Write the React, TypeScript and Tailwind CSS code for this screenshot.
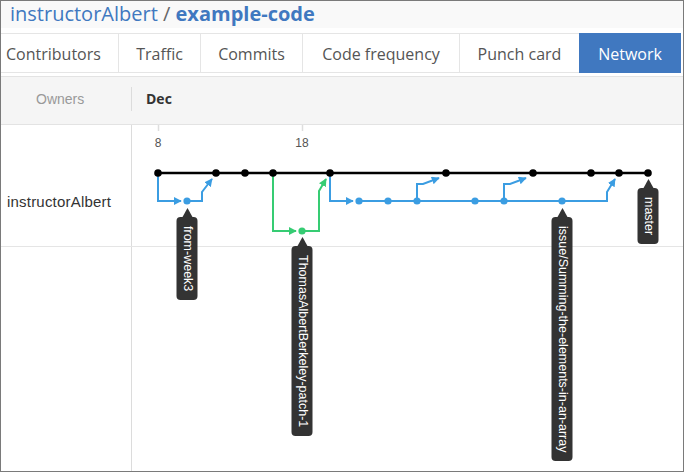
import React from 'react';

const BLUE = '#3b9de2';
const GREEN = '#36cc73';

const TABS = [
  { label: 'Contributors', cls: 'w-[118px] justify-start pl-[5px] border-r border-[#e5e5e5]' },
  { label: 'Traffic', cls: 'w-[82px] justify-center border-r border-[#e5e5e5]' },
  { label: 'Commits', cls: 'w-[102px] justify-center border-r border-[#e5e5e5]' },
  { label: 'Code frequency', cls: 'w-[157px] justify-center border-r border-[#e5e5e5]' },
  { label: 'Punch card', cls: 'w-[119px] justify-center' },
];

const MASTER_DOTS = [158, 216, 245, 273, 330, 446, 533, 591, 619, 648];
const BLUE_DOTS = [187, 359, 388, 417, 475, 504, 562];

// branch labels: x = dot x in body coords, top = pointer tip in body coords
const LABELS = [
  { text: 'from-week3', pos: 'left-[186px] top-[83px]' },
  { text: 'ThomasAlbertBerkeley-patch-1', pos: 'left-[301px] top-[112px]' },
  { text: 'issue/Summing-the-elements-in-an-array', pos: 'left-[561px] top-[83px]' },
  { text: 'master', pos: 'left-[647px] top-[54px]' },
];

function BranchLabel({ text, pos }: { text: string; pos: string }) {
  return (
    <div className={`absolute ${pos} -translate-x-1/2 flex flex-col items-center`}>
      <div className="w-0 h-0 border-x-[5px] border-x-transparent border-b-[9px] border-b-[#333]" />
      <div className="w-[21px] bg-[#333] rounded-[4px] py-[9px] flex justify-center">
        <span className="[writing-mode:vertical-rl] leading-[21px] text-[12.5px] text-white font-['Liberation_Sans',Arial,sans-serif] whitespace-nowrap">
          {text}
        </span>
      </div>
    </div>
  );
}

function NetworkGraph() {
  const line = { fill: 'none', strokeWidth: 2, strokeLinejoin: 'miter' as const };
  return (
    <svg
      className="absolute left-0 top-0"
      width={682}
      height={346}
      viewBox="1 125 682 346"
    >
      <defs>
        <marker id="arrowBlue" viewBox="0 0 10 10" refX="9" refY="5" markerWidth="8" markerHeight="8" markerUnits="userSpaceOnUse" orient="auto">
          <path d="M0,0 L10,5 L0,10 z" fill={BLUE} />
        </marker>
        <marker id="arrowGreen" viewBox="0 0 10 10" refX="9" refY="5" markerWidth="8" markerHeight="8" markerUnits="userSpaceOnUse" orient="auto">
          <path d="M0,0 L10,5 L0,10 z" fill={GREEN} />
        </marker>
      </defs>

      {/* day ticks */}
      <line x1={158.5} y1={125} x2={158.5} y2={131} stroke="#dedede" strokeWidth={1.5} />
      <line x1={302.5} y1={125} x2={302.5} y2={131} stroke="#dedede" strokeWidth={1.5} />
      <text x={158} y={146.5} textAnchor="middle" fontSize={12} fill="#555" fontFamily="'Liberation Sans', Arial, sans-serif">8</text>
      <text x={302} y={146.5} textAnchor="middle" fontSize={12} fill="#555" fontFamily="'Liberation Sans', Arial, sans-serif">18</text>

      {/* blue branches */}
      <path d="M158,173 V201 H181" stroke={BLUE} {...line} markerEnd="url(#arrowBlue)" />
      <path d="M187,201 H202 V192 L212,179" stroke={BLUE} {...line} markerEnd="url(#arrowBlue)" />
      <path d="M330,173 V201 H353" stroke={BLUE} {...line} markerEnd="url(#arrowBlue)" />
      <path d="M359,201 H607 V192 L615,179" stroke={BLUE} {...line} markerEnd="url(#arrowBlue)" />
      <path d="M417,201 V184 H423 L439,178" stroke={BLUE} {...line} markerEnd="url(#arrowBlue)" />
      <path d="M504,201 V184 H510 L526,178" stroke={BLUE} {...line} markerEnd="url(#arrowBlue)" />

      {/* green branch */}
      <path d="M273,173 V231 H296" stroke={GREEN} {...line} markerEnd="url(#arrowGreen)" />
      <path d="M302,231 H319 V191 L326,179" stroke={GREEN} {...line} markerEnd="url(#arrowGreen)" />

      {/* master */}
      <path d="M158,173 H648" stroke="#000" strokeWidth={2.5} fill="none" />
      {MASTER_DOTS.map((x) => (
        <circle key={x} cx={x} cy={173} r={3.8} fill="#000" />
      ))}
      {BLUE_DOTS.map((x) => (
        <circle key={x} cx={x} cy={201} r={3.6} fill={BLUE} />
      ))}
      <circle cx={302} cy={231} r={3.6} fill={GREEN} />
    </svg>
  );
}

export default function App() {
  return (
    <div className="w-[684px] h-[472px] border border-[#7a7a7a] bg-white overflow-hidden flex flex-col font-['Open_Sans',sans-serif]">
      {/* repo title */}
      <div className="h-[27px] bg-[#f9f9f9] pl-[9px] text-[20px] leading-[26px] whitespace-nowrap">
        <span className="text-[#4078c0]">instructorAlbert</span>
        <span className="text-[#666]"> / </span>
        <span className="text-[#4078c0] font-bold">example-code</span>
      </div>

      {/* graph tabs */}
      <div className="mt-[5px] w-[680px] h-[40px] flex">
        {TABS.map((t) => (
          <div
            key={t.label}
            className={`${t.cls} h-full flex items-center border-y border-y-[#e5e5e5] pt-[1px] text-[16px] leading-[24px] text-[#555] whitespace-nowrap`}
          >
            {t.label}
          </div>
        ))}
        <div className="w-[102px] h-full flex items-center justify-center bg-[#4078c0] pt-[1px] text-[16px] leading-[24px] text-white">
          Network
        </div>
      </div>

      {/* owners / month header */}
      <div className="mt-[3px] h-[49px] border-y border-[#e3e3e3] bg-[#f5f5f5] flex items-center pb-[3px]">
        <div className="w-[130px] pl-[35px] text-[14px] leading-[20px] text-[#999] font-['Liberation_Sans',Arial,sans-serif]">
          Owners
        </div>
        <div className="w-px h-[24px] bg-[#dcdcdc]" />
        <div className="pl-[14px] text-[14px] leading-[20px] font-bold text-[#333]">Dec</div>
      </div>

      {/* network canvas */}
      <div className="relative flex-1 flex flex-col">
        <div className="h-[122px] flex border-b border-[#e5e5e5]">
          <div className="w-[131px] border-r border-[#dcdcdc] pt-[67px] pl-[6px] text-[15px] leading-[20px] tracking-[0.2px] text-[#333] font-['Liberation_Sans',Arial,sans-serif]">
            instructorAlbert
          </div>
          <div className="flex-1" />
        </div>
        <div className="flex-1 flex">
          <div className="w-[131px] border-r border-[#dcdcdc]" />
          <div className="flex-1" />
        </div>

        <NetworkGraph />
        {LABELS.map((l) => (
          <BranchLabel key={l.text} text={l.text} pos={l.pos} />
        ))}
      </div>
    </div>
  );
}
